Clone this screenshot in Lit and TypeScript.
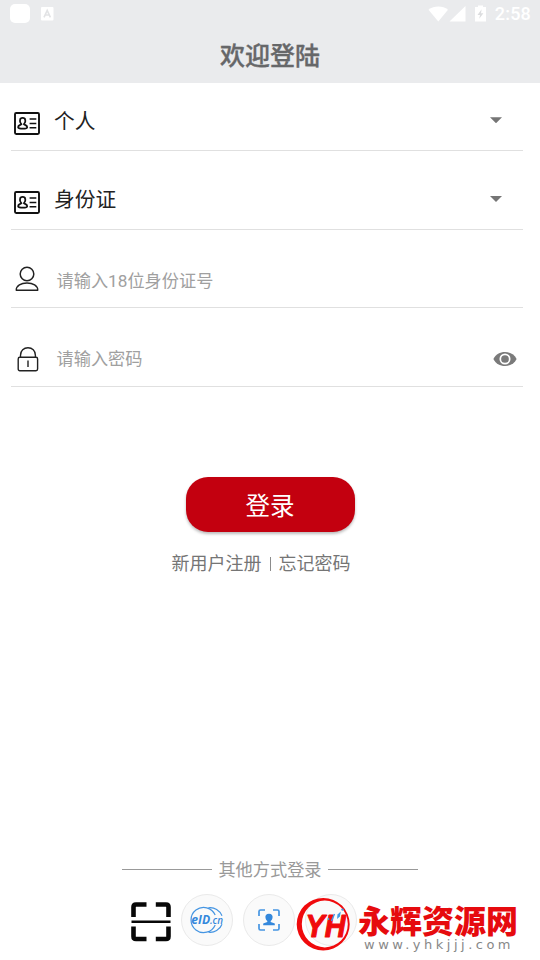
import { LitElement, html, css, svg } from "lit";
import { customElement, property } from "lit/decorators.js";

const cardIcon = svg`<svg class="glyph" width="26" height="23" viewBox="0 0 26 23" fill="none" stroke="#111">
  <rect x="1" y="1" width="24" height="21" rx="1.2" stroke-width="1.9"/>
  <path d="M7.3 12.2C6 10.8 5.7 9.5 6 8C6.4 5.2 10.9 5.2 11.3 8C11.6 9.5 11.3 10.8 10 12.2C10.6 13 13.2 12.9 13.2 15.2C13.2 17.2 4.1 17.2 4.1 15.2C4.1 12.9 6.7 13 7.3 12.2Z" stroke-width="1.8"/>
  <path d="M15.6 7H22.3M15.6 11.4H22.3M15.6 15.8H22.3" stroke-width="1.5"/>
</svg>`;

const personIcon = svg`<svg class="glyph" width="24" height="26" viewBox="0 0 24 26" fill="none" stroke="#222" stroke-width="1.5">
  <circle cx="12" cy="8" r="6.8"/>
  <path d="M1.3 24.2C1 19.5 6.2 17 12 17S23 19.5 22.7 24.2Z" stroke-linejoin="round"/>
</svg>`;

const lockIcon = svg`<svg class="glyph" width="22" height="26" viewBox="0 0 22 26" fill="none" stroke="#222" stroke-width="1.4">
  <rect x="1.2" y="11.3" width="19.4" height="13.4" rx="1.6"/>
  <path d="M3.5 11V9.2C3.5 4.6 6.8 1.7 11 1.7S18.4 4.6 18.4 9.2V11M11 14.5V21"/>
</svg>`;

const eyeIcon = svg`<svg class="eye" width="24" height="16" viewBox="0 0 24 16">
  <path d="M.4 8C2.5 3.5 7 1 12 1S21.5 3.5 23.6 8C21.5 12.5 17 15 12 15S2.5 12.5.4 8Z" fill="#7a7a7a"/>
  <circle cx="12" cy="8" r="4.7" fill="#7a7a7a" stroke="#fff" stroke-width="1.7"/>
</svg>`;

@customElement("login-field")
export class LoginField extends LitElement {
  @property() kind = "";
  @property() text = "";

  static styles = css`
    :host { display: block; }
    .row { height: 77.6px; display: flex; align-items: center; border-bottom: 1px solid #e0e0e0; }
    .slot { width: 32px; height: 26px; display: flex; align-items: center; justify-content: center; margin-top: 22px; flex: none; }
    .slot.card { margin-top: 25px; }
    .slot.lock { padding-left: 1px; margin-top: 23px; }
    .slot.lock + .label { margin-left: 12.5px; }
    .label { flex: 1; margin: 20.5px 0 0 11px; font-size: 20.7px; line-height: 30px; color: #222; }
    .label.hint { margin: 24.5px 0 0 13.5px; font-size: 17.2px; color: #a0a0a0; }
    .arrow { width: 12px; height: 6px; margin: 18px 21px 0 0; background: #757575; clip-path: polygon(0 0, 100% 0, 50% 100%); }
    .eye { margin: 24px 6px 0 0; }
  `;

  render() {
    const select = this.kind === "select";
    const icon = select ? cardIcon : this.kind === "user" ? personIcon : lockIcon;
    const slot = select ? "card" : this.kind === "password" ? "lock" : "";
    return html`<div class="row">
      <div class="slot ${slot}">${icon}</div>
      <div class="label ${select ? "" : "hint"}">${this.text}</div>
      ${select ? html`<div class="arrow"></div>` : this.kind === "password" ? eyeIcon : ""}
    </div>`;
  }
}

@customElement("app-root")
export class AppRoot extends LitElement {
  static styles = css`
    :host { display: block; font-family: Roboto, "Noto Sans CJK SC", sans-serif; }
    .page { position: relative; width: 540px; height: 960px; background: #fff; overflow: hidden; display: flex; flex-direction: column; }
    .head { height: 83px; background: #eaebed; flex: none; }
    .status { height: 28px; padding: 0 9px 0 10px; display: flex; align-items: center; color: #fff; }
    .app { width: 20px; height: 19px; border-radius: 5px; background: #fff; margin: -1px 11px 0 0; }
    .space { flex: 1; }
    .clock { font-size: 18px; line-height: 28px; font-weight: 500; margin-left: 7px; letter-spacing: .2px; }
    .title { margin: -1px 0 0; text-align: center; font-family: "Noto Sans CJK SC", sans-serif; font-size: 25px; line-height: 54px; font-weight: 500; color: #666769; -webkit-text-stroke: .35px #666769; }
    .form { padding: 0 17px 0 11px; margin-top: -10.5px; }
    .login { align-self: center; width: 169px; height: 55px; margin-top: 90.5px; border: 0; border-radius: 22px; background: #c3000f; color: #fff; font: 24.5px/55px "Noto Sans CJK SC", sans-serif; padding: 0; box-shadow: 0 2px 3px #0004; flex: none; }
    .links { display: flex; align-items: center; margin: 18px 0 0 171.5px; font-size: 18px; line-height: 28px; color: #757575; }
    .bar { width: 1px; height: 14px; background: #8c8c8c; margin: 0 8px; }
    .other { display: flex; align-items: center; justify-content: center; gap: 6.5px; margin-top: 278px; font-size: 17.2px; line-height: 28px; color: #999; }
    .rule { width: 90px; height: 1px; background: #999; margin-top: -2px; }
    .ways { display: flex; align-items: center; margin: 10px 0 0 131px; }
    .scan { margin: 3px 10px 0 0; }
    .way { box-sizing: border-box; width: 52px; height: 52px; border-radius: 50%; border: 1px solid #eaeaea; background: #fafafa; display: flex; align-items: center; justify-content: center; margin-right: 10px; }
    .mark { position: absolute; left: 296px; top: 896px; display: flex; }
    .words { margin-left: 8px; display: flex; flex-direction: column; }
    .brand { font-family: "Noto Sans CJK SC", sans-serif; font-size: 32px; line-height: 34px; height: 34px; font-weight: 900; color: #e60b0e; margin-top: 6px; white-space: nowrap; text-shadow: 0 0 2px #fff; }
    .url { font-family: "DejaVu Sans", sans-serif; font-size: 13px; line-height: 14px; letter-spacing: 3.5px; color: #888; margin: 2px 0 0 6px; white-space: nowrap; }
  `;

  render() {
    return html`<div class="page">
      <header class="head">
        <div class="status">
          <div class="app"></div>
          <svg width="13" height="14" viewBox="0 0 13 14"><rect width="12.5" height="13.5" rx="1" fill="#fff"/><path d="M3 10.3L6.2 3.3L9.4 10.3M4.2 8H8.2" fill="none" stroke="#e2e3e5" stroke-width="1.6"/></svg>
          <div class="space"></div>
          <svg width="60" height="18" viewBox="0 0 60 18" fill="#fff">
            <path d="M.5 4.7C6.1.3 14.7.3 20 4.7L10.3 16.5Z"/>
            <path d="M21.5 16.5L37.5 1V16.5Z"/>
            <path d="M47 2H50V.5H55V2H58V16.5H47Z"/>
            <path d="M53.6 4.3L49.5 9.9H52L51.2 13.7L55.4 8.2H53Z" fill="#dcdddf"/>
          </svg>
          <div class="clock">2:58</div>
        </div>
        <h1 class="title">欢迎登陆</h1>
      </header>
      <main class="form">
        <login-field kind="select" text="个人"></login-field>
        <login-field kind="select" text="身份证"></login-field>
        <login-field kind="user" text="请输入18位身份证号"></login-field>
        <login-field kind="password" text="请输入密码"></login-field>
      </main>
      <button class="login">登录</button>
      <div class="links"><span>新用户注册</span><i class="bar"></i><span>忘记密码</span></div>
      <div class="other"><i class="rule"></i><span>其他方式登录</span><i class="rule"></i></div>
      <div class="ways">
        <svg class="scan" width="40" height="40" viewBox="0 0 40 40" fill="none" stroke="#080808" stroke-width="4.6">
          <path d="M2.5 15V5Q2.5 2.5 5 2.5H15.5M24.8 2.5H35Q37.5 2.5 37.5 5V15M37.5 24.5V34.5Q37.5 37 35 37H24.8M15.5 37H5Q2.5 37 2.5 34.5V24.5"/>
          <path d="M.5 19.7H39.5" stroke-width="2.5"/>
        </svg>
        <div class="way"><svg width="36" height="30" viewBox="0 0 36 30" fill="none" stroke="#4595e2">
          <path d="M26.2 10A12.6 12.6 0 1 0 26.2 20M19.5 2.8A12.6 12.6 0 0 1 33 10.8M33 19.2A12.6 12.6 0 0 1 19.5 27.2" stroke-width="1.2"/>
          <text x="2.3" y="19" fill="#3488dc" stroke="none" font-family="Open Sans, sans-serif" font-weight="700" font-style="italic" font-size="12.5" textLength="18.8" lengthAdjust="spacingAndGlyphs">eID</text>
          <text x="21" y="19" fill="#3488dc" stroke="none" font-family="Open Sans, sans-serif" font-weight="600" font-style="italic" font-size="10" textLength="13" lengthAdjust="spacingAndGlyphs">.cn</text>
        </svg></div>
        <div class="way"><svg width="22" height="22" viewBox="0 0 22 22" fill="none" stroke="#4595e2" stroke-width="1.7">
          <path d="M1 7V2.5Q1 1 2.5 1H7M15 1H19.5Q21 1 21 2.5V7M21 15V19.5Q21 21 19.5 21H15M7 21H2.5Q1 21 1 19.5V15"/>
          <path d="M11 4.8C13.8 4.8 15 6.8 14.5 9C14.2 10.7 13.3 11.4 12.7 12V13L16.8 14.6V16.3H5.2V14.6L9.3 13V12C8.7 11.4 7.8 10.7 7.5 9C7 6.8 8.2 4.8 11 4.8Z" fill="#3488dc" stroke="none"/>
        </svg></div>
        <div class="way"></div>
      </div>
      <div class="mark">
        <svg width="54" height="56" viewBox="0 0 54 56">
          <path fill-rule="evenodd" d="M.7 28.2A26.5 26.3 0 1 1 53.7 28.2A26.5 26.3 0 1 1 .7 28.2ZM5.8 28A23 23.4 0 1 0 51.8 28A23 23.4 0 1 0 5.8 28Z" fill="#f00a0c"/>
          <text x="9.5" y="40.7" fill="#f00a0c" stroke="#f00a0c" stroke-width="1.2" stroke-linejoin="round" font-family="Liberation Sans, sans-serif" font-size="32" font-weight="700" font-style="italic" textLength="40" lengthAdjust="spacingAndGlyphs">YH</text>
          <path d="M41.5 18.5L44.8 15.5L44 20.5L41 23Z" fill="#3d9ce8"/><circle cx="46.5" cy="13.6" r="1.2" fill="#3d9ce8"/>
          <path d="M35.5 25L38.5 18M32.5 24V22" stroke="#3d9ce8" stroke-width="1.4"/>
        </svg>
        <div class="words"><div class="brand">永辉资源网</div><div class="url">www.yhkjjj.com</div></div>
      </div>
    </div>`;
  }
}
